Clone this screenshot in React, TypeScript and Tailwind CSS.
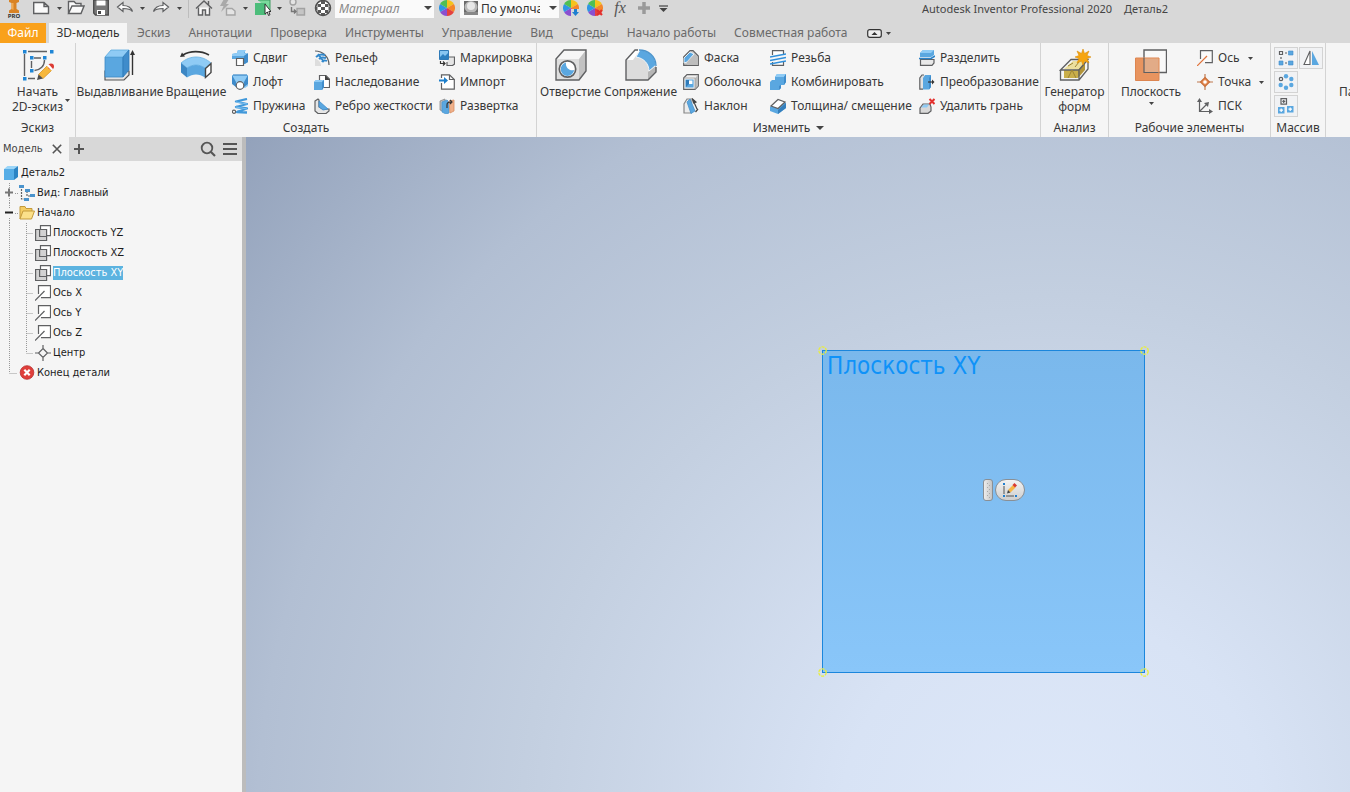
import React from "react";

type KidsProps = { children?: React.ReactNode };

const LINE = "#5f6062";
const BLUE = "#5aa7e0";
const DEEP = "#3f8ccb";
const PALE = "#8fcbf5";

/* ---------- icon frames ---------- */

function Small({ children }: KidsProps) {
  return (
    <svg className="size-4 shrink-0" viewBox="0 0 16 16" fill="none" stroke={LINE} strokeWidth="1.2" aria-hidden="true">
      {children}
    </svg>
  );
}

function Large({ children }: KidsProps) {
  return (
    <svg className="size-8 shrink-0" viewBox="0 0 32 32" fill="none" stroke={LINE} strokeWidth="1.4" aria-hidden="true">
      {children}
    </svg>
  );
}

function Tool({ children }: KidsProps) {
  return (
    <svg className="size-[18px] shrink-0" viewBox="0 0 18 18" fill="none" stroke={LINE} strokeWidth="1.4" aria-hidden="true">
      {children}
    </svg>
  );
}

function Caret({ big = false }: { big?: boolean }) {
  return big ? (
    <svg className="h-1 w-2 shrink-0" viewBox="0 0 8 4" fill="#444" aria-hidden="true">
      <path d="M0 0h8L4 4z" />
    </svg>
  ) : (
    <svg className="h-[3px] w-[5px] shrink-0" viewBox="0 0 5 3" fill="#444" aria-hidden="true">
      <path d="M0 0h5L2.500 3z" />
    </svg>
  );
}

/* ---------- large ribbon icons ---------- */

const sketchIcon = (
  <Large>
    <path d="M6 2.500h19M2.500 5v22M6 29.500h7M12 9h7M9.500 12v7M22.500 11c0 6-4 10-10 10.500" />
    <g fill="#1f86d6" stroke="none">
      <path d="M1 1h3.500v3.500H1zM28 1h3.500v3.500H28zM1 28h3.500v3.500H1zM8 7h3.500v3.500H8zM21 7h3.500v3.500H21zM8 20h3.500v3.500H8z" />
    </g>
    <path d="M16.500 25.500l8.500-8.500 4.500 4.500-8.500 8z" fill="#f6b73c" stroke="#d99527" strokeWidth=".8" />
    <path d="M16.500 25.500l4.500 4-6 1.500z" fill="#4d4d4d" stroke="none" />
    <circle cx="29" cy="17.500" r="3" fill="#dc3b34" stroke="none" />
    <path d="M25 17l4.500 4.500 1.500-1.500-4.300-4.700z" fill="#fff" stroke="none" />
  </Large>
);

const extrudeIcon = (
  <Large>
    <path d="M1 27v4h19l5-5v-4H1z" fill="#e4e4e4" stroke="#555" strokeWidth="1.200" />
    <path d="M1 8h18v20H1z" fill={BLUE} stroke="#3b88c5" strokeWidth=".8" />
    <path d="M1 8l6-7h18l-6 7z" fill={PALE} stroke="#5aa9dd" strokeWidth=".8" />
    <path d="M19 8l6-7v20l-6 7z" fill={DEEP} stroke="#2f7ab8" strokeWidth=".8" />
    <path d="M28.500 26V4" stroke="#333" />
    <path d="M28.500 1l2.500 5h-5z" fill="#333" stroke="none" />
  </Large>
);

const revolveIcon = (
  <Large>
    <path d="M3 6c7-4.500 18-4.500 26 0" stroke="#333" strokeWidth="1.600" />
    <path d="M0 8l2-4.500 3 4z" fill="#333" stroke="none" />
    <path d="M1 14c9-8 21-8 30 0l-6 5c-6-4-12-4-18 0z" fill={PALE} stroke="#62afe2" strokeWidth=".8" />
    <path d="M1 14l6 5v9.500l-6-5z" fill="#3c87c4" stroke="none" />
    <path d="M7 19c6-4 12-4 18 0v9.500c-6-4-12-4-18 0z" fill={BLUE} stroke="none" />
    <path d="M25.500 19.500l5.500-5v9l-5.500 5z" fill="#fff" stroke="#444" />
  </Large>
);

const holeIcon = (
  <Large>
    <path d="M1 10l8-9h22v21l-7 9H1z" fill="#f6f6f6" stroke="none" />
    <path d="M1 10h23v21H1z" fill="#dedede" stroke="none" />
    <path d="M24 10l7-9v21l-7 9z" fill="#c2c2c2" stroke="none" />
    <path d="M1 10l8-9h22v21l-7 9H1z" />
    <circle cx="12.500" cy="20" r="8.200" fill="#fff" strokeWidth="1.700" />
    <path d="M11 13.500a6.800 6.800 0 1 0 8.200 7.500c-4 1.500-9-2-8.200-7.500z" fill={BLUE} stroke="none" />
  </Large>
);

const filletIcon = (
  <Large>
    <path d="M1 11L11 1h4c9 0 16 7 16 15v7l-8 8H1z" fill="#dcdcdc" stroke="none" />
    <path d="M1 11L11 1h4L8 11z" fill="#fff" stroke="none" />
    <path d="M23 23l8-6v6l-8 8z" fill="#b5b5b5" stroke="none" />
    <path d="M15 1c9 0 16 7 16 15l-7 6c0-7-5-13-13-14z" fill={BLUE} stroke="#fff" strokeWidth=".8" />
    <path d="M13 1h-3l-9 10v20h22l8-8v-5" />
    <path d="M14 1c9 0 17 6 17 16" stroke="#4d94cb" />
  </Large>
);

const shapeGenIcon = (
  <Large>
    <path d="M5 20l9-8h13l-7 9z" fill="#ecdf9e" stroke="none" />
    <path d="M5 21h14v8H5z" fill="#c9ae4a" stroke="none" />
    <path d="M19 21l7-8v8l-7 8z" fill="#b3953a" stroke="none" />
    <path d="M1.500 21L12 10.500h17L20 21H1.500zM1.500 21v10H20l9-11v-8M20 21v10" strokeWidth="1.300" />
    <path d="M9 29l4-8 4 8M9 17l5-3M16 18l4-5" stroke="#9d8434" strokeWidth="1" />
    <path d="M24 0l1.500 4.500L30 2l-2 4.500 4 1.500-4 1.500 2 4.500-4.500-2L24 16l-1.500-4-4.500 2 2-4.500-4-1.500 4-1.500L18 2l4.500 2.500z" fill="#f6a50f" stroke="#dc8e0c" strokeWidth=".6" />
  </Large>
);

const planeIcon = (
  <Large>
    <path d="M9 1h22.500v22.500H9z" fill="#f9f9f9" />
    <path d="M.5 9H24v22.500H.5z" fill="#e8945f" stroke="#dd8550" strokeWidth="1" />
    <path d="M9 9.500h14.500v14H9z" fill="#e2ab87" stroke="none" />
    <path d="M9 9v14.500h14.500" strokeWidth="1.200" />
  </Large>
);

/* ---------- small ribbon icons ---------- */

const sweepIcon = (
  <Small>
    <path d="M0 4l5-1 1-3h7v3l3 1v8l-3 2H5V9H0z" fill={BLUE} stroke="none" />
    <path d="M0 4l5-1 1-3h8l-2 3 3 1-3 2H0z" fill={PALE} stroke="none" />
    <path d="M12 6l4-3v9l-4 2z" fill={DEEP} stroke="none" />
    <path d="M4.500 8.500h7v7h-7z" fill="#fff" />
  </Small>
);
const loftIcon = (
  <Small>
    <path d="M0 1h16v11l-3 2-9-1-4-5z" fill={PALE} stroke="none" />
    <path d="M0 1l4 7v5l-4-3zM16 1l-4 7v5l4-3z" fill={DEEP} stroke="none" />
    <path d="M1 1h14" stroke="#3987c6" />
    <circle cx="8" cy="11.500" r="3.800" fill="#fff" />
  </Small>
);
const coilIcon = (
  <Small>
    <path d="M15 1L4 3.500l11 2.500L4 9l11 1.500L5 14l10 .5" stroke="#4098da" strokeWidth="2.300" strokeLinejoin="round" />
    <path d="M4 4l11 2M4 9l11 2" stroke={PALE} strokeWidth=".8" />
    <circle cx="2" cy="13.800" r="1.600" fill="#fff" />
  </Small>
);
const embossIcon = (
  <Small>
    <path d="M1 9c3 0 6 3 6 7H1z" fill="#ddd" stroke="none" />
    <path d="M1 1c8 0 14 6 14 14" />
    <path d="M2 7c3-3 6-3 9-2M5 9c2-2 4-2 7-1M8 12c1-2 3-2 5-1M4 4l6 8" stroke="#3288cc" strokeWidth="1.900" />
  </Small>
);
const deriveIcon = (
  <Small>
    <path d="M5.500 7V1.500H12L15.500 5v8.500H9" fill="#fff" />
    <path d="M11 1v5h5z" fill="#444" stroke="none" />
    <path d="M0 8l2-2h8v7l-2 3H0z" fill={BLUE} stroke="none" />
    <path d="M0 8l2-2h8L8 8z" fill={PALE} stroke="none" />
    <path d="M8 8l2-2v7l-2 3z" fill={DEEP} stroke="none" />
  </Small>
);
const ribIcon = (
  <Small>
    <path d="M1 3l3-2 1 1v7l4 2h6v2l-3 2.500H4L1 13z" fill="#e6e6e6" />
    <path d="M5 3l9 8-5 1-4-3z" fill={BLUE} stroke="#3f8ccb" strokeWidth=".8" />
  </Small>
);
const decalIcon = (
  <Small>
    <path d="M10 7h5.500v7l-2 1.500H8V12" fill="#e5e5e5" />
    <path d="M.5.5h9v9h-9z" fill="#87c5f1" stroke="#2f7ab8" strokeWidth="1" />
    <path d="M1 7l3-3 2 2 3-3v6H1z" fill="#2c7fc0" stroke="none" />
    <path d="M1.500 11v2.500H6M4 11.500l2 2-2 2" stroke="#333" />
  </Small>
);
const importIcon = (
  <Small>
    <path d="M2.500 4V.8h8L15.300 5.500v9.700H2.500V9" fill="#fff" />
    <path d="M10.500 1v4.500h5" />
    <path d="M0 6.500h6" stroke="#1d7fcb" strokeWidth="2" />
    <path d="M5 3l4 3.500L5 10z" fill="#1d7fcb" stroke="none" />
  </Small>
);
const unwrapIcon = (
  <Small>
    <path d="M1 3l5-2v13l-5-2z" fill="#bbb" stroke="#888" strokeWidth=".8" />
    <path d="M3 4l5-2 2 2v11l-3 1-4-2z" fill={BLUE} stroke="#4d97d0" strokeWidth=".8" />
    <path d="M10 3l5-1v11l-4 2z" fill="#efb08a" stroke="#d88e61" strokeWidth=".8" />
    <path d="M8 7c0-2 1-3 4-3M11 2l2 2-2 2M8 7v3" stroke="#333" />
  </Small>
);
const chamferIcon = (
  <Small>
    <path d="M.7 7L7 .7h3L15.300 6v9.300H.7z" fill="#c9c9c9" />
    <path d="M1 8l6-6 4 2-7 8-3 1z" fill={BLUE} stroke="#fff" strokeWidth=".8" />
    <path d="M4 12l8-8 3 3v8H4z" fill="#bdbdbd" stroke="none" />
  </Small>
);
const shellIcon = (
  <Small>
    <path d="M.7 4L4 .7h11.300V12L12 15.300H.7z" fill="#f0f0f0" />
    <path d="M12 4l3-3v11l-3 3z" fill="#bbb" stroke="none" />
    <path d="M.7 4H12v11.300" stroke="#999" strokeWidth=".8" />
    <path d="M3 6h7v7H3z" fill="#fff" stroke={BLUE} />
    <path d="M3 6h3v7H3z" fill="#2f7ab8" stroke="none" />
    <path d="M3 13l3-3h4v3z" fill={BLUE} stroke="none" />
  </Small>
);
const draftIcon = (
  <Small>
    <path d="M1 15V6l3-5h4v14z" fill="#ececec" stroke="#888" />
    <path d="M4 4l3-3 5 12-4 2.500z" fill={BLUE} stroke="#4792cc" strokeWidth=".8" />
    <path d="M12.500 14L15 11M10 2l4 9M9.500 1l1 4 2.500-1z" fill="#333" stroke="#444" />
  </Small>
);
const threadIcon = (
  <Small>
    <path d="M2.500 5V.700h11V4M2.500 12v3.300h11V11" fill="#fff" />
    <path d="M0 7l16-3M0 10.500l16-3M0 14l16-3" stroke="#2f8fdb" strokeWidth="1.500" />
  </Small>
);
const combineIcon = (
  <Small>
    <path d="M0 8l2-2h3V3l2-3h9v8l-2 3h-3v3l-2 2H0z" fill={BLUE} stroke="none" />
    <path d="M5 3l2-3h9l-2 3z" fill={PALE} stroke="none" />
    <path d="M14 3l2-3v8l-2 3zM9 12l2-1v3l-2 2z" fill={DEEP} stroke="none" />
  </Small>
);
const thickenIcon = (
  <Small>
    <path d="M0 9l9-7 7 3v5l-8 6-8-3z" fill={BLUE} stroke="none" />
    <path d="M8 12l8-7v5l-8 6z" fill="#347fbd" stroke="none" />
    <path d="M1 8l7-6.500L15 4 8 10.500z" fill="#fff" />
  </Small>
);
const splitIcon = (
  <Small>
    <path d="M1.500 9.500H15V13l-2 2.300H1.500z" fill="#e9e9e9" />
    <path d="M1 3l3-3h11v5l-3 2H1z" fill={BLUE} stroke="none" />
    <path d="M1 3l3-3h11l-3 3z" fill={PALE} stroke="none" />
    <path d="M0 8.500h12l4-2.500" stroke="#2a83cb" strokeWidth="1.600" />
  </Small>
);
const convertIcon = (
  <Small>
    <path d="M5 1H3L.8 4v11.200H4" fill="#e3e3e3" />
    <path d="M4 4l2-3h6v12l-2 2.500H4z" fill={BLUE} stroke="none" />
    <path d="M10 4l2-3v12l-2 2.500z" fill={DEEP} stroke="none" />
    <path d="M9 8h5" stroke="#333" />
    <path d="M13 5.500L15.500 8 13 10.500z" fill="#333" stroke="none" />
  </Small>
);
const deleteFaceIcon = (
  <Small>
    <path d="M1 10l3-4h7l1 3v4l-3 2.300H1z" fill="#d8d8d8" />
    <path d="M2 9.500l3-3h5l-2 3z" fill={PALE} stroke="none" />
    <path d="M10.500 1l5 5m0-5l-5 5" stroke="#e3302d" strokeWidth="2" />
  </Small>
);
const axisIcon = (
  <Small>
    <path d="M3.500 9V.700h11.800v12H8" fill="#fafafa" />
    <path d="M0 16L10 6" stroke="#e0733a" />
  </Small>
);
const pointIcon = (
  <Small>
    <path d="M8 0v16M0 8h16" stroke="#c07a50" />
    <path d="M8 3.500L12.500 8 8 12.500 3.500 8z" fill="#e88a52" stroke="#c96f3a" />
    <circle cx="8" cy="8" r="1.800" fill="#fff" stroke="none" />
  </Small>
);
const ucsIcon = (
  <Small>
    <path d="M2.500 2v11.500H14M2.500 13.500L10 6" />
    <path d="M2.500 0L5 4H0zM16 13.500L12 16v-5zM12 4l-1 5-4-4z" fill={LINE} stroke="none" />
  </Small>
);
const rectPatternIcon = (
  <Small>
    <path d="M1.500 1.500h3v3h-3zM7 3h2M7 13h2M3 7v2" />
    <path d="M10.500 1H15v4h-4.500zM1 11h4v4H1zM10.500 11H15v4h-4.500z" fill={BLUE} stroke={DEEP} strokeWidth=".6" />
  </Small>
);
const mirrorIcon = (
  <Small>
    <path d="M7 1v13.500H1z" fill="#fff" strokeWidth="1.100" />
    <path d="M9 1v14h7z" fill={BLUE} stroke="none" />
  </Small>
);
const circPatternIcon = (
  <Small>
    <circle cx="3" cy="5" r="1.700" />
    <g fill={BLUE} stroke="none">
      <circle cx="8" cy="2.200" r="2.200" />
      <circle cx="13.300" cy="5" r="2.200" />
      <circle cx="13.300" cy="11" r="2.200" />
      <circle cx="8" cy="13.800" r="2.200" />
      <circle cx="2.700" cy="11" r="2.200" />
    </g>
  </Small>
);
const sketchPatternIcon = (
  <Small>
    <path d="M3 .600h5.500v5.500H3zM5.700 2v3M4.300 3.400h3" />
    <path d="M0 9h6.500v6.500H0zM9 8h6.500v6.500H9z" fill={BLUE} stroke="none" />
    <path d="M3.200 10.500v3.500M1.500 12.200H5M12.200 9.500V13M10.500 11.200H14" stroke="#fff" />
  </Small>
);

/* ---------- tree icons ---------- */

const planeNode = (
  <Small>
    <path d="M5.500.6h10v10h-10z" fill="#fff" />
    <path d="M.6 4.500h11v11H.6z" fill="#d2d2d2" />
    <path d="M4.600 4.500v7h7" />
  </Small>
);
const axisNode = (
  <Small>
    <path d="M3.500 9V.600h12v12H6" fill="#fff" />
    <path d="M0 15.500L9.500 6" />
  </Small>
);
const centerNode = (
  <Small>
    <path d="M8 0v4M8 12v4M0 8h4M12 8h4M8 3.500L12.500 8 8 12.500 3.500 8z" />
  </Small>
);
const folderNode = (
  <Small>
    <path d="M1 14V1.500h5l1 2h6V6" fill="#f5cd62" stroke="#c39a3c" strokeWidth="1" />
    <path d="M1 14L4 6h11.500l-3 8z" fill="#fbe08a" stroke="#c39a3c" strokeWidth="1" />
  </Small>
);
const viewNode = (
  <Small>
    <path d="M2.500 4v10H6M8 6v5h3" strokeDasharray="2 1" />
    <path d="M0 0h5v3H0zM6 4h5v3H6zM11 9h5v3h-5zM5 13h5v3H5z" fill="#4a93cc" stroke="none" />
  </Small>
);
const endNode = (
  <Small>
    <circle cx="8" cy="7.500" r="6.800" fill="#df3f3b" stroke="#b92b2b" strokeWidth=".8" />
    <path d="M5.300 4.800l5.400 5.400m0-5.400l-5.400 5.400" stroke="#fff" strokeWidth="2.200" />
  </Small>
);
const partNode = (
  <Small>
    <path d="M1 4h10v11H1z" fill="#56ade6" stroke="none" />
    <path d="M1 4l3.500-3H15l-4 3z" fill="#9ad5f8" stroke="none" />
    <path d="M11 4l4-3v11l-4 3z" fill="#2c84c4" stroke="none" />
  </Small>
);

/* ---------- title bar ---------- */

function Wheel() {
  return (
    <g stroke="none">
      <path d="M8 8L8 0A8 8 0 0 1 14.900 4z" fill="#f6c21c" />
      <path d="M8 8L14.900 4A8 8 0 0 1 14.900 12z" fill="#f5862a" />
      <path d="M8 8L14.900 12A8 8 0 0 1 8 16z" fill="#e5413e" />
      <path d="M8 8L8 16A8 8 0 0 1 1.100 12z" fill="#8a4fd0" />
      <path d="M8 8L1.100 12A8 8 0 0 1 1.100 4z" fill="#2f96e4" />
      <path d="M8 8L1.100 4A8 8 0 0 1 8 0z" fill="#4fbf53" />
    </g>
  );
}

function QuickButton({ label, width, children }: { label: string; width: string; children: React.ReactNode }) {
  return (
    <button type="button" aria-label={label} className={`flex h-4 shrink-0 items-center justify-center ${width}`}>
      {children}
    </button>
  );
}

function TitleBar() {
  return (
    <header className="flex h-[23px] items-start overflow-hidden whitespace-nowrap bg-[#d8d8d8]">
      <div className="flex w-7 shrink-0 flex-col items-center">
        <svg className="h-[13px] w-3" viewBox="0 0 12 13" aria-hidden="true">
          <path d="M1 0h10v2L8.500 3v6L11 10.500V13H1v-2.500L3.500 9V3L1 2z" fill="#d98324" />
          <path d="M3.500 3h2v7l-2-1z" fill="#f1ab54" />
        </svg>
        <span className="text-[6px] font-bold leading-[7px] text-[#333]">PRO</span>
      </div>
      <QuickButton label="Создать" width="w-[26px]">
        <Tool><path d="M1.700 3.500H12l4.500 4v7H1.700zM12 3.500v4h4.500" fill="#fafafa" /></Tool>
      </QuickButton>
      <QuickButton label="Варианты создания" width="w-[10px]"><Caret /></QuickButton>
      <QuickButton label="Открыть" width="w-6">
        <Tool><path d="M1.500 14.500V2.500H7l2 2h5V7M1.500 14.500L5 7h12l-3 7.500z" fill="#fafafa" /></Tool>
      </QuickButton>
      <QuickButton label="Сохранить" width="w-[26px]">
        <Tool>
          <path d="M1.700 1h14.600v15H3.500l-1.800-2z" fill="#777" stroke="#4d4d4d" />
          <path d="M4.500 1.500h9v5h-9zM5 11h8v5H5z" fill="#fff" stroke="none" />
          <path d="M6 12h3v3H6z" fill="#444" stroke="none" />
        </Tool>
      </QuickButton>
      <QuickButton label="Отменить" width="w-[22px]">
        <Tool><path d="M1.500 8L7 3.500v3c5 0 8 1.500 9.500 6-2.500-3-5.500-3-9.500-3v3z" fill="#fafafa" strokeWidth="1.200" /></Tool>
      </QuickButton>
      <QuickButton label="Список отмены" width="w-3"><Caret /></QuickButton>
      <QuickButton label="Повторить" width="w-[26px]">
        <Tool><path d="M16.500 8L11 3.500v3c-5 0-8 1.500-9.500 6 2.500-3 5.500-3 9.500-3v3z" fill="#fafafa" strokeWidth="1.200" /></Tool>
      </QuickButton>
      <QuickButton label="Список повтора" width="w-[10px]"><Caret /></QuickButton>
      <div className="mx-1 h-[18px] w-px shrink-0 bg-[#bdbdbd]" />
      <QuickButton label="Главная" width="w-[22px]">
        <Tool>
          <path d="M3.500 8.500V16h4v-5h3v5h4V8.500" fill="#fafafa" />
          <path d="M1 9.500L9 2l8 7.500M13.500 2v4" />
        </Tool>
      </QuickButton>
      <QuickButton label="Обновить" width="w-[26px]">
        <Tool>
          <path d="M5 0h5L7 5h3L2 13l2.500-6H1z" fill="#a9a9a9" stroke="none" />
          <path d="M7.500 9.500H13l3 2.500v4H7.500z" fill="#e4e4e4" stroke="#a5a5a5" />
        </Tool>
      </QuickButton>
      <QuickButton label="Варианты обновления" width="w-2"><Caret /></QuickButton>
      <QuickButton label="Выбор" width="w-[26px]">
        <Tool>
          <path d="M5 1h12v12" fill="#7bd99c" stroke="#3f9c62" strokeWidth="1" />
          <path d="M2 4h11v12H2z" fill="#4dbd7b" stroke="none" />
          <path d="M12 5v10l2.300-2 1.200 3.500 1.500-.8-1.200-3.200H18z" fill="#fff" stroke="#333" strokeWidth="1" />
        </Tool>
      </QuickButton>
      <QuickButton label="Варианты выбора" width="w-2"><Caret /></QuickButton>
      <QuickButton label="Связи" width="w-7">
        <Tool>
          <circle cx="5" cy="3" r="3" fill="#e4e4e4" stroke="#a2a2a2" />
          <path d="M9 9.500h7.500V16H9z" fill="#c5c5c5" stroke="#a2a2a2" />
          <path d="M3.500 8v4.500H8M6 10.500l2 2-2 2" stroke="#777" />
        </Tool>
      </QuickButton>
      <QuickButton label="Материал" width="w-6">
        <Tool>
          <circle cx="9" cy="9" r="7.500" fill="#fff" stroke="#4c4c4c" strokeWidth="1.500" />
          <path d="M7 2h4v3H7zM3.500 5H7v3H3.500zM11 5h3.500v3H11zM7 8h4v3H7zM3.500 11H7v3H3.500zM11 11h3.500v3H11zM1.500 8h2v3h-2zM14.500 8h2v3h-2zM7 14h4v2.500H7z" fill="#585858" stroke="none" />
        </Tool>
      </QuickButton>
      <label className="relative flex h-[18px] w-[99px] shrink-0 items-center bg-[#fafafa]">
        <select aria-label="Материал" className="h-4 w-full appearance-none bg-transparent pl-1 text-xs italic leading-4 text-[#888] outline-none">
          <option>Материал</option>
        </select>
        <span className="pointer-events-none absolute right-[2px] top-1.5 flex"><Caret big /></span>
      </label>
      <QuickButton label="Цвет" width="w-[26px]">
        <svg className="size-4" viewBox="0 0 16 16" aria-hidden="true"><Wheel /></svg>
      </QuickButton>
      <label className="relative flex h-[18px] w-[99px] shrink-0 items-center bg-[#fafafa] pl-1">
        <svg className="h-4 w-3.5 shrink-0" viewBox="0 0 14 16" aria-hidden="true">
          <path d="M0 0h14v14H0z" fill="#6a6a6a" />
          <ellipse cx="7" cy="6" rx="6.500" ry="6" fill="#b9b9b9" />
          <ellipse cx="7" cy="5" rx="4" ry="4" fill="#e8e8e8" />
          <path d="M0 11h14v3H0z" fill="#888" />
        </svg>
        <select aria-label="Представление" className="h-4 w-[76px] appearance-none overflow-hidden bg-transparent pl-[3px] pr-3.5 text-xs leading-4 text-[#333] outline-none">
          <option>По умолчанию</option>
        </select>
        <span className="pointer-events-none absolute right-[2px] top-1.5 flex"><Caret big /></span>
      </label>
      <QuickButton label="Настроить цвет" width="w-6">
        <svg className="size-4" viewBox="0 0 16 16" aria-hidden="true">
          <Wheel />
          <path d="M8 9h8v7H8z" fill="#d8d8d8" />
          <path d="M11 9h3v3h2l-3.500 4L9 12h2z" fill="#1f7fd0" />
        </svg>
      </QuickButton>
      <QuickButton label="Очистить цвет" width="w-6">
        <svg className="size-4" viewBox="0 0 16 16" aria-hidden="true">
          <Wheel />
          <path d="M10 10l5 5m0-5l-5 5" stroke="#e3302d" strokeWidth="2.200" />
        </svg>
      </QuickButton>
      <QuickButton label="Параметры" width="w-[26px]">
        <span className="font-['Liberation_Serif',serif] text-base italic leading-[18px] text-[#555]">fx</span>
      </QuickButton>
      <QuickButton label="Добавить" width="w-[22px]">
        <svg className="size-3" viewBox="0 0 12 12" aria-hidden="true"><path d="M6 0v12M0 6h12" stroke="#9a9a9a" strokeWidth="3.500" /></svg>
      </QuickButton>
      <QuickButton label="Настройка панели" width="w-4">
        <svg className="h-[7px] w-[9px]" viewBox="0 0 9 7" aria-hidden="true"><path d="M0 1h9" stroke="#444" strokeWidth="1.200" /><path d="M.5 3h8l-4 4z" fill="#444" /></svg>
      </QuickButton>
      <h1 className="ml-[251px] flex gap-3 text-[11px] leading-[18px] text-[#444]">
        <span>Autodesk Inventor Professional 2020</span>
        <span>Деталь2</span>
      </h1>
    </header>
  );
}

/* ---------- ribbon ---------- */

const tabs = ["Эскиз", "Аннотации", "Проверка", "Инструменты", "Управление", "Вид", "Среды", "Начало работы", "Совместная работа"];

function Tabs() {
  return (
    <nav className="flex h-5 items-stretch whitespace-nowrap bg-[#d8d8d8] text-xs text-[#6a6a6a]">
      <button type="button" className="mr-[3px] w-[46px] shrink-0 bg-[#f9a11b] text-white">Файл</button>
      <button type="button" aria-current="page" className="mr-px w-[78px] shrink-0 bg-[#f5f5f5] text-[#333]">3D-модель</button>
      {tabs.map((t) => (
        <button key={t} type="button" className="px-[9px]">{t}</button>
      ))}
      <button type="button" aria-label="Свернуть ленту" className="ml-2.5 flex items-center gap-1">
        <svg className="h-[9px] w-[15px]" viewBox="0 0 15 9" fill="none" aria-hidden="true">
          <rect x=".7" y=".7" width="13.600" height="7.600" rx="2" fill="#eee" stroke="#333" strokeWidth="1.200" />
          <path d="M4.500 6h6l-3-3z" fill="#333" />
        </svg>
        <Caret />
      </button>
    </nav>
  );
}

type Item = { icon: React.ReactNode; text: string; caret?: boolean };

function Column({ items, width }: { items: Item[]; width: string }) {
  return (
    <div className={`flex shrink-0 flex-col ${width}`}>
      {items.map((it) => (
        <button key={it.text} type="button" className="flex h-6 items-center gap-[5px] text-left">
          {it.icon}
          <span>{it.text}</span>
          {it.caret && <span className="ml-[3px]"><Caret /></span>}
        </button>
      ))}
    </div>
  );
}

function Big({ icon, lines, width, caret }: { icon: React.ReactNode; lines: string[]; width: string; caret?: "below" | "side" }) {
  return (
    <button type="button" className={`relative flex h-[72px] shrink-0 flex-col items-center pt-[3px] ${width}`}>
      {icon}
      <span className="mt-[3px] flex flex-col text-center leading-[15px]">
        {lines.map((l) => <span key={l}>{l}</span>)}
      </span>
      {caret === "below" && <span className="mt-[3px] flex"><Caret /></span>}
      {caret === "side" && <span className="absolute bottom-4 right-[5px] flex"><Caret /></span>}
    </button>
  );
}

function Panel({ title, width, caret, children }: { title: string; width: string; caret?: boolean; children: React.ReactNode }) {
  return (
    <section className={`flex shrink-0 flex-col border-r border-[#d3d3d3] pt-[3px] ${width}`}>
      <div className="flex h-[72px]">{children}</div>
      <h2 className="flex h-[19px] items-center justify-center gap-1.5">
        {title}
        {caret && <Caret big />}
      </h2>
    </section>
  );
}

function PatternButton({ label, icon }: { label: string; icon: React.ReactNode }) {
  return (
    <button type="button" aria-label={label} className="flex h-[22px] w-6 items-center justify-center border border-[#d3d3d3] bg-[#f1f2f4]">
      {icon}
    </button>
  );
}

function Ribbon() {
  return (
    <div className="flex h-[94px] overflow-hidden whitespace-nowrap bg-[#f5f5f5] text-xs text-[#383838]">
      <Panel title="Эскиз" width="w-[76px]">
        <Big icon={sketchIcon} lines={["Начать", "2D-эскиз"]} width="w-[75px]" caret="side" />
      </Panel>
      <Panel title="Создать" width="w-[461px]">
        <Big icon={extrudeIcon} lines={["Выдавливание"]} width="w-[88px]" />
        <Big icon={revolveIcon} lines={["Вращение"]} width="w-16" />
        <div className="flex pl-1">
          <Column width="w-[82px]" items={[{ icon: sweepIcon, text: "Сдвиг" }, { icon: loftIcon, text: "Лофт" }, { icon: coilIcon, text: "Пружина" }]} />
          <Column width="w-[125px]" items={[{ icon: embossIcon, text: "Рельеф" }, { icon: deriveIcon, text: "Наследование" }, { icon: ribIcon, text: "Ребро жесткости" }]} />
          <Column width="w-24" items={[{ icon: decalIcon, text: "Маркировка" }, { icon: importIcon, text: "Импорт" }, { icon: unwrapIcon, text: "Развертка" }]} />
        </div>
      </Panel>
      <Panel title="Изменить" width="w-[504px]" caret>
        <Big icon={holeIcon} lines={["Отверстие"]} width="w-[67px]" />
        <Big icon={filletIcon} lines={["Сопряжение"]} width="w-[73px]" />
        <div className="flex pl-1.5">
          <Column width="w-[87px]" items={[{ icon: chamferIcon, text: "Фаска" }, { icon: shellIcon, text: "Оболочка" }, { icon: draftIcon, text: "Наклон" }]} />
          <Column width="w-[149px]" items={[{ icon: threadIcon, text: "Резьба" }, { icon: combineIcon, text: "Комбинировать" }, { icon: thickenIcon, text: "Толщина/ смещение" }]} />
          <Column width="w-[120px]" items={[{ icon: splitIcon, text: "Разделить" }, { icon: convertIcon, text: "Преобразование" }, { icon: deleteFaceIcon, text: "Удалить грань" }]} />
        </div>
      </Panel>
      <Panel title="Анализ" width="w-[68px]">
        <Big icon={shapeGenIcon} lines={["Генератор", "форм"]} width="w-[67px]" />
      </Panel>
      <Panel title="Рабочие элементы" width="w-[162px]">
        <Big icon={planeIcon} lines={["Плоскость"]} width="w-[84px]" caret="below" />
        <div className="flex pl-1">
          <Column width="w-[72px]" items={[{ icon: axisIcon, text: "Ось", caret: true }, { icon: pointIcon, text: "Точка", caret: true }, { icon: ucsIcon, text: "ПСК" }]} />
        </div>
      </Panel>
      <Panel title="Массив" width="w-[55px]">
        <div className="grid grid-cols-2 content-start gap-x-px gap-y-0.5 pl-[3px] pt-px">
          <PatternButton label="Прямоугольный массив" icon={rectPatternIcon} />
          <PatternButton label="Зеркальное отражение" icon={mirrorIcon} />
          <div><PatternButton label="Круговой массив" icon={circPatternIcon} /></div>
          <span />
          <div><PatternButton label="Массив по эскизу" icon={sketchPatternIcon} /></div>
        </div>
      </Panel>
      <button type="button" className="flex h-[72px] min-w-0 flex-1 flex-col items-start overflow-hidden pl-[13px] pt-[41px] leading-[15px]">
        Панель
      </button>
    </div>
  );
}

/* ---------- model browser ---------- */

function Guide({ kind, narrow = false }: { kind: "through" | "branch" | "last"; narrow?: boolean }) {
  const x = narrow ? 7.5 : 9.5;
  const end = narrow ? 16 : 19;
  return (
    <svg className={narrow ? "h-5 w-4 shrink-0" : "h-5 w-[19px] shrink-0"} viewBox={`0 0 ${end} 20`} stroke="#999" strokeDasharray="1 1" aria-hidden="true">
      <path d={`M${x} 0V${kind === "last" ? 10 : 20}`} />
      {kind !== "through" && <path d={`M${x} 10.500H${end - 2}`} />}
    </svg>
  );
}

function Toggle({ open }: { open: boolean }) {
  return (
    <svg className="h-5 w-[19px] shrink-0" viewBox="0 0 19 20" aria-hidden="true">
      <path d="M9.500 0v5M9.500 15v5M15 10.500h4" stroke="#999" strokeDasharray="1 1" />
      <path d="M5 9.500h8" stroke={open ? "#222" : "#777"} strokeWidth="2" />
      {!open && <path d="M9 5.500v8" stroke="#777" strokeWidth="2" />}
    </svg>
  );
}

const originItems = [
  { icon: planeNode, text: "Плоскость YZ" },
  { icon: planeNode, text: "Плоскость XZ" },
  { icon: planeNode, text: "Плоскость XY", selected: true },
  { icon: axisNode, text: "Ось X" },
  { icon: axisNode, text: "Ось Y" },
  { icon: axisNode, text: "Ось Z" },
  { icon: centerNode, text: "Центр" },
];

function Browser() {
  return (
    <aside className="w-[246px] shrink-0 border-r-4 border-[#bcbcbc] bg-[#f5f5f5] font-['DejaVu_Sans_Condensed','DejaVu_Sans',sans-serif] text-[11px] text-[#1c1c1c]">
      <div className="flex h-6 items-center bg-[#d8d8d8]">
        <div className="flex h-6 w-[69px] items-center justify-between bg-[#f5f5f5] pl-[3px] pr-[7px] text-[#444]">
          <span>Модель</span>
          <button type="button" aria-label="Закрыть">
            <svg className="size-2.5" viewBox="0 0 10 10" stroke="#555" strokeWidth="1.600" aria-hidden="true"><path d="M.8.8l8.400 8.400M9.200.8L.8 9.200" /></svg>
          </button>
        </div>
        <button type="button" aria-label="Добавить панель" className="ml-[5px]">
          <svg className="size-2.5" viewBox="0 0 10 10" stroke="#555" strokeWidth="2" aria-hidden="true"><path d="M5 0v10M0 5h10" /></svg>
        </button>
        <button type="button" aria-label="Поиск" className="ml-auto">
          <svg className="size-4" viewBox="0 0 16 16" fill="none" stroke="#555" strokeWidth="1.800" aria-hidden="true"><circle cx="7" cy="7" r="5.300" /><path d="M11 11l4 4" strokeWidth="2.200" /></svg>
        </button>
        <button type="button" aria-label="Меню" className="ml-[7px] mr-[5px]">
          <svg className="h-3 w-3.5" viewBox="0 0 14 12" stroke="#555" strokeWidth="2" aria-hidden="true"><path d="M0 1h14M0 6h14M0 11h14" /></svg>
        </button>
      </div>
      <ul className="pt-0.5 leading-[14px]">
        <li className="flex h-5 items-center gap-0.5 pl-[3px]">{partNode}<span>Деталь2</span></li>
        <li className="flex h-5 items-center"><Toggle open={false} />{viewNode}<span className="ml-0.5">Вид: Главный</span></li>
        <li>
          <div className="flex h-5 items-center"><Toggle open />{folderNode}<span className="ml-0.5">Начало</span></div>
          <ul>
            {originItems.map((o, i) => (
              <li key={o.text} className="flex h-5 items-center">
                <Guide kind="through" />
                <Guide narrow kind={i === originItems.length - 1 ? "last" : "branch"} />
                {o.icon}
                <span className={o.selected ? "ml-0.5 bg-[#5cb3e0] text-white" : "ml-0.5"}>{o.text}</span>
              </li>
            ))}
          </ul>
        </li>
        <li className="flex h-5 items-center"><Guide kind="last" />{endNode}<span className="ml-0.5">Конец детали</span></li>
      </ul>
    </aside>
  );
}

/* ---------- 3D view ---------- */

const corners = ["-left-[5px] -top-[5px]", "-right-[5px] -top-[5px]", "-left-[5px] -bottom-[5px]", "-right-[5px] -bottom-[5px]"];

function Viewport() {
  return (
    <main className="relative min-w-0 flex-1 overflow-hidden bg-[radial-gradient(circle_at_73%_105%,#dee8f9_0%,#d8e3f5_20%,#c3cfe0_50%,#b2bfd3_75%,#93a2bb_100%)]">
      <div className="absolute left-[576px] top-[213px] size-[323px] border border-[#1b86dc] bg-linear-to-b from-[#7ab8ec] to-[#89c6f9]">
        <p className="pl-1 font-['DejaVu_Sans_Condensed','DejaVu_Sans',sans-serif] text-2xl leading-[30px] text-[#0f92f8]">Плоскость XY</p>
        {corners.map((c) => (
          <svg key={c} className={`absolute size-[9px] ${c}`} viewBox="0 0 9 9" fill="none" aria-hidden="true">
            <circle cx="4.500" cy="4.500" r="3.700" stroke="#e9ee3c" strokeWidth="1.300" strokeDasharray="3 1" />
          </svg>
        ))}
        <div className="absolute left-40 top-32 flex gap-0.5">
          <div className="h-[22px] w-2.5 rounded-[3px] border border-[#8a8f94] bg-linear-to-r from-[#ededed] to-[#c4c4c4]">
            <svg className="h-5 w-2" viewBox="0 0 8 20" fill="#aaa" aria-hidden="true">
              <path d="M3 3h1v1H3zM5 5h1v1H5zM3 7h1v1H3zM5 9h1v1H5zM3 11h1v1H3zM5 13h1v1H5zM3 15h1v1H3zM5 17h1v1H5z" />
            </svg>
          </div>
          <button type="button" aria-label="Создать эскиз" className="flex h-[22px] w-[30px] items-center justify-center rounded-full border border-[#8a8f94] bg-linear-to-b from-[#f2f2f2] to-[#cfcfcf]">
            <svg className="size-4" viewBox="0 0 16 16" fill="none" aria-hidden="true">
              <path d="M2 4v8M4 14h8" stroke="#555" />
              <path d="M1 1h2v2H1zM1 13h2v2H1zM13 13h2v2h-2z" fill="#1f7fd0" />
              <path d="M6 8l5-5 2.500 2.500-5 5z" fill="#f6b545" />
              <path d="M6 8l2.500 2.500L5 11.500z" fill="#444" />
              <path d="M10.500 3l2-2L15 3.500l-2 2z" fill="#d9382f" />
            </svg>
          </button>
        </div>
      </div>
    </main>
  );
}

export default function App() {
  return (
    <div className="flex min-h-screen flex-col overflow-hidden bg-[#f5f5f5] font-['Noto_Sans','Open_Sans',sans-serif]">
      <TitleBar />
      <Tabs />
      <Ribbon />
      <div className="flex flex-1">
        <Browser />
        <Viewport />
      </div>
    </div>
  );
}
